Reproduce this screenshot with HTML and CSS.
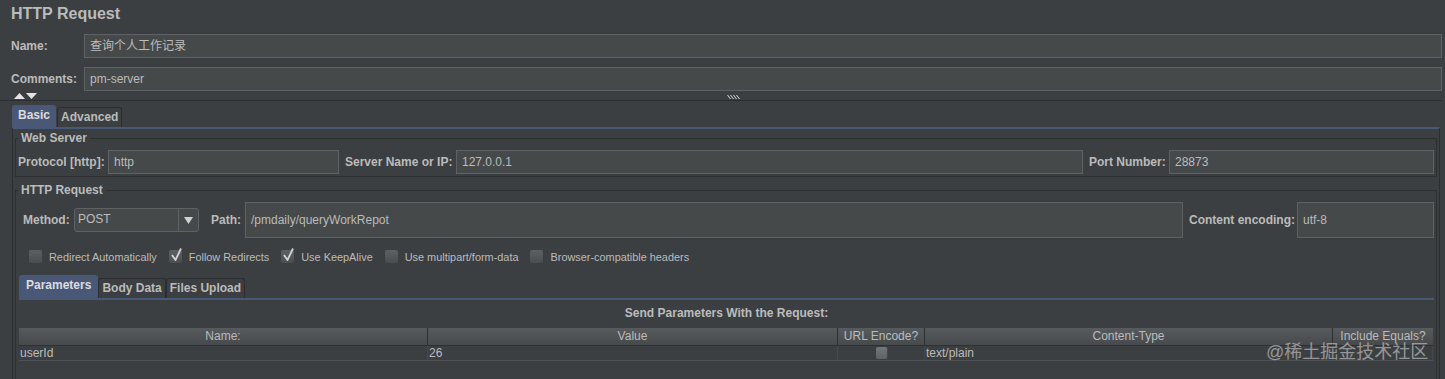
FILE: index.html
```html
<!DOCTYPE html>
<html lang="en">

<head>
  <meta charset="UTF-8" />
  <title>HTTP Request</title>
  <link rel="stylesheet" href="styles.css">
</head>

<body>

  <!-- ELEMENT HEADER -->
  <div class="editor">
    <h1 class="title">HTTP Request</h1>
    <div class="form-row name-row">
      <label>Name:</label>
      <div class="field">查询个人工作记录</div>
    </div>
    <div class="form-row comments-row">
      <label>Comments:</label>
      <div class="field">pm-server</div>
    </div>
  </div>

  <div class="splitter">
    <svg class="arrows" width="23" height="6" viewBox="0 0 23 6">
      <path d="M0 6 L5.5 0 L11 6 Z M12 0 L23 0 L17.5 6 Z" fill="#e4e4e4" />
    </svg>
    <svg class="grip" width="14" height="4" viewBox="0 0 14 4">
      <path d="M0.5 0 l3 4 M3.5 0 l3 4 M6.5 0 l3 4 M9.5 0 l3 4" stroke="#d8d8d8" stroke-width="1" />
    </svg>
  </div>

  <!-- BASIC / ADVANCED -->
  <div class="tab-strip">
    <span class="tab active">Basic</span>
    <span class="tab">Advanced</span>
  </div>

  <div class="tab-panel">
    <fieldset class="group web-server">
      <legend>Web Server</legend>
      <div class="server-row">
        <label>Protocol [http]:</label>
        <div class="field">http</div>
        <label>Server Name or IP:</label>
        <div class="field">127.0.0.1</div>
        <label>Port Number:</label>
        <div class="field">28873</div>
      </div>
    </fieldset>

    <fieldset class="group request">
      <legend>HTTP Request</legend>
      <div class="method-row">
        <label>Method:</label>
        <div class="combo">
          <span class="combo-value">POST</span>
          <span class="combo-arrow">
            <svg width="9" height="7" viewBox="0 0 9 7"><path d="M0 0 H9 L4.5 7 Z" fill="#d0d0d0" /></svg>
          </span>
        </div>
        <label class="path-label">Path:</label>
        <div class="field tall">/pmdaily/queryWorkRepot</div>
        <label>Content encoding:</label>
        <div class="field tall">utf-8</div>
      </div>

      <div class="options">
        <span class="check"><span class="box"></span>Redirect Automatically</span>
        <span class="check"><span class="box checked"></span>Follow Redirects</span>
        <span class="check"><span class="box checked"></span>Use KeepAlive</span>
        <span class="check"><span class="box"></span>Use multipart/form-data</span>
        <span class="check"><span class="box"></span>Browser-compatible headers</span>
      </div>

      <!-- PARAMETERS / BODY DATA / FILES UPLOAD -->
      <div class="tab-strip sub-tabs">
        <span class="tab active">Parameters</span>
        <span class="tab">Body Data</span>
        <span class="tab">Files Upload</span>
      </div>

      <div class="params">
        <div class="params-title">Send Parameters With the Request:</div>
        <div class="table">
          <div class="table-head">
            <span>Name:</span>
            <span>Value</span>
            <span>URL Encode?</span>
            <span>Content-Type</span>
            <span>Include Equals?</span>
          </div>
          <div class="table-row">
            <span>userId</span>
            <span>26</span>
            <span class="cell-check"><span class="mini-box"></span></span>
            <span>text/plain</span>
            <span></span>
          </div>
          <span class="watermark">@稀土掘金技术社区</span>
        </div>
      </div>
    </fieldset>
  </div>

</body>

</html>
```

FILE: styles.css
```css
/* Base */
* {
  box-sizing: border-box;
}

body {
  margin: 0;
  height: 379px;
  overflow: hidden;
  background: #3c3f41;
  color: #bbbbbb;
  font-family: "Liberation Sans", "Noto Sans CJK SC", sans-serif;
  font-size: 12px;
}

label {
  font-weight: bold;
  white-space: nowrap;
}

.field {
  height: 24px;
  line-height: 22px;
  padding: 0 5px;
  background: #45494a;
  border: 1px solid #5f6264;
  white-space: nowrap;
  overflow: hidden;
}

/* Header */
.editor {
  padding: 0 3px 0 11px;
}

.title {
  margin: 0;
  height: 28px;
  line-height: 28px;
  font-size: 16px;
  font-weight: bold;
}

.form-row {
  display: grid;
  grid-template-columns: 73px 1fr;
  align-items: center;
}

.name-row {
  margin-top: 6px;
}

.comments-row {
  margin-top: 9px;
}

.splitter {
  display: flex;
  align-items: flex-start;
  height: 10px;
  margin-right: 3px;
  padding: 2px 0 0 14px;
  border-bottom: 1px solid #2b2d2e;
}

.grip {
  margin: 2px 0 0 690px;
}

/* Tabs */
.tab-strip {
  display: flex;
  align-items: flex-end;
  gap: 1px;
  height: 26px;
  margin-left: 12px;
}

.tab {
  height: 20px;
  line-height: 19px;
  padding: 0 3px;
  border: 1px solid #2b2d2f;
  border-bottom: 0;
  border-radius: 3px 3px 0 0;
  font-weight: bold;
  white-space: nowrap;
}

.tab.active {
  height: 22px;
  line-height: 19px;
  padding: 0 5px;
  background: #4a5878;
  border-color: #4a5878;
  color: #dcdcdc;
}

.tab-panel {
  height: 260px;
  margin: 0 5px 0 12px;
  border-top: 2px solid #4a5878;
  border-left: 1px solid #2b2d2f;
  border-right: 1px solid #2b2d2f;
}

/* Titled groups */
.group {
  min-width: 0;
  margin: 0 2px;
  padding: 0 2px;
  border: 1px solid #2d2f31;
}

.group legend {
  padding: 0 3px;
  font-weight: bold;
  line-height: 14px;
}

.web-server {
  margin-top: 2px;
  padding-top: 5px;
  padding-bottom: 2px;
}

.request {
  height: 250px;
  margin-top: 6px;
  padding-top: 5px;
}

.server-row {
  display: grid;
  grid-template-columns: 84px 231px 105px 627px 74px 1fr;
  column-gap: 6px;
  align-items: center;
}

.method-row {
  display: grid;
  grid-template-columns: 45px 125px 34px 938px 102px 1fr;
  column-gap: 6px;
  align-items: center;
  height: 36px;
  padding-left: 5px;
}

.method-row .path-label {
  padding-left: 6px;
}

.field.tall {
  height: 36px;
  line-height: 34px;
}

.combo {
  display: flex;
  height: 24px;
  background: #45494a;
  border: 1px solid #5f6264;
  border-radius: 3px;
}

.combo-value {
  flex: 1;
  padding-left: 3px;
  line-height: 20px;
}

.combo-arrow {
  display: flex;
  align-items: center;
  justify-content: center;
  width: 20px;
  border-left: 1px solid #5f6264;
}

/* Checkboxes */
.options {
  display: flex;
  gap: 12px;
  height: 13px;
  margin-top: 12px;
  padding-left: 11px;
  font-size: 10.9px;
}

.check {
  display: flex;
  align-items: center;
  gap: 7px;
  white-space: nowrap;
}

.box {
  position: relative;
  width: 13px;
  height: 13px;
  border-radius: 2px;
  background: linear-gradient(#5d6062, #4b4e50);
}

.box.checked::after {
  content: "";
  position: absolute;
  left: 2px;
  top: -2px;
  width: 11px;
  height: 13px;
  background: url("data:image/svg+xml,%3Csvg xmlns='http://www.w3.org/2000/svg' width='11' height='13'%3E%3Cpath d='M1 7 L4.5 12 L10 0.5' fill='none' stroke='%23d2d2d2' stroke-width='1.8'/%3E%3C/svg%3E") no-repeat;
}

/* Parameters table */
.sub-tabs {
  gap: 0;
  height: 23px;
  margin: 12px 0 0 1px;
}

.sub-tabs .tab {
  padding: 0 3px;
}

.sub-tabs .tab.active {
  height: 23px;
  padding: 0 6px;
}

.params {
  margin-left: 1px;
  border-top: 2px solid #4a5878;
}

.params-title {
  padding-top: 6px;
  line-height: 14px;
  text-align: center;
  font-weight: bold;
}

.table {
  position: relative;
  margin: 8px 1px 0 0;
}

.table-head,
.table-row {
  display: grid;
  grid-template-columns: 409px 410px 87px 408px 1fr;
}

.table-head {
  height: 17px;
  background: linear-gradient(#585b5d, #474a4c);
}

.table-head span {
  line-height: 17px;
  text-align: center;
  border-right: 1px solid #2e3032;
  white-space: nowrap;
}

.table-head span:last-child {
  border-right: 0;
}

.table-row {
  height: 16px;
  border-top: 1px solid #2e3032;
  border-bottom: 1px solid #505355;
}

.table-row span {
  padding-left: 1px;
  line-height: 14px;
  border-right: 1px solid #46494b;
}

.cell-check {
  display: flex;
  align-items: center;
  justify-content: center;
}

.mini-box {
  width: 12px;
  height: 12px;
  border-radius: 2px;
  background: linear-gradient(#74777a, #5f6264);
}

.watermark {
  position: absolute;
  left: 1247px;
  top: 15px;
  font-size: 18px;
  line-height: 19px;
  color: rgba(225, 225, 225, 0.55);
  white-space: nowrap;
}
```
